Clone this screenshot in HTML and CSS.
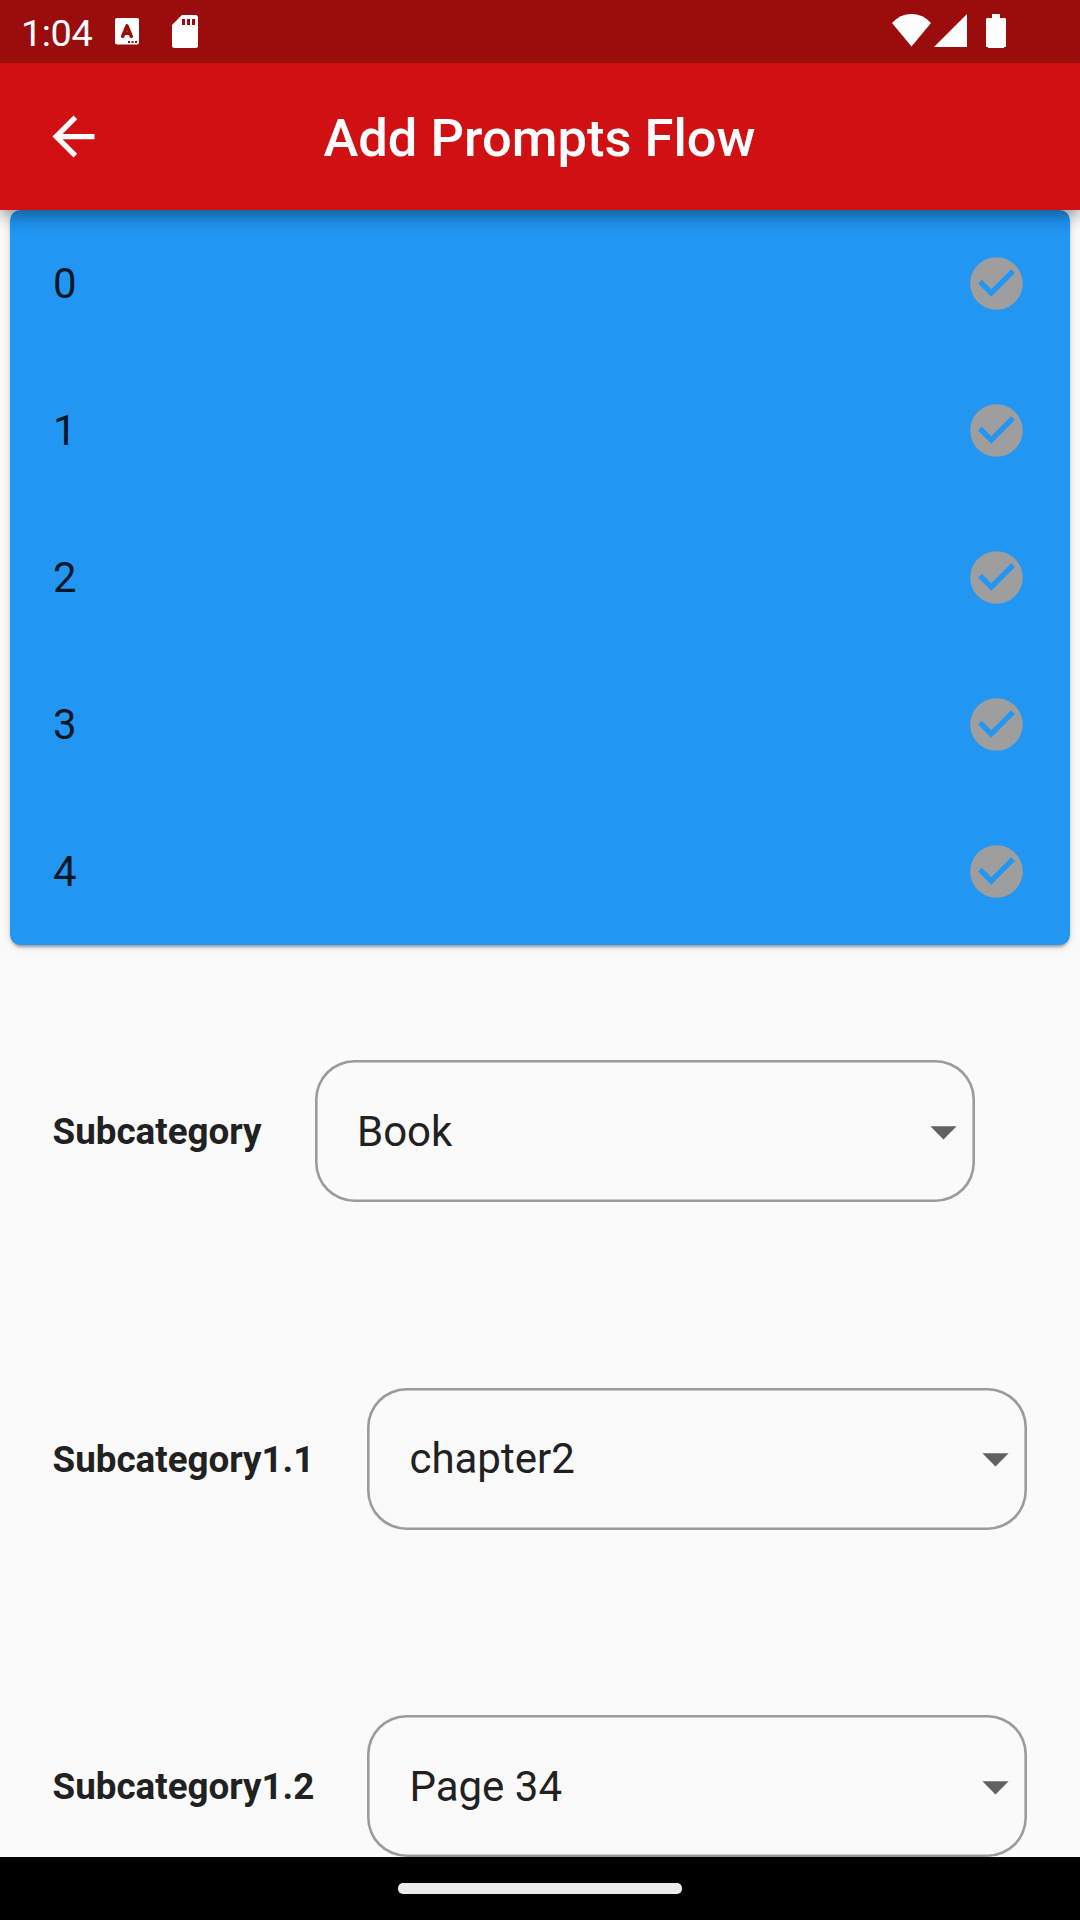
FILE: index.html
```html
<!DOCTYPE html>
<html lang="en">
<head>
<meta charset="utf-8">
<title>Add Prompts Flow</title>
<link rel="stylesheet" href="styles.css">
</head>
<body>
<svg class="defs" aria-hidden="true">
  <symbol id="check" viewBox="0 0 24 24"><path d="M12 2C6.48 2 2 6.48 2 12s4.480 10 10 10 10-4.480 10-10S17.520 2 12 2zm-2 15l-5-5 1.410-1.410L10 14.170l7.590-7.590L19 8l-9 9z"/></symbol>
  <symbol id="caret" viewBox="0 0 24 24"><path d="M7 10l5 5 5-5z"/></symbol>
</svg>
<div class="screen">
  <header class="top">
    <div class="status">
      <span class="clock">1:04</span>
      <svg class="keyboard" viewBox="0 0 24 27"><rect width="24" height="26.500" rx="2"/><path class="letter" d="M7.700 18.300L12 7.800L16.300 18.300M9 15.300H15"/><path class="dots" d="M13 23h2v2h-2zM16.500 23h2v2h-2zM20 23h2v2h-2z"/></svg>
      <svg class="sdcard" viewBox="0 0 26 33"><path d="M10 0H23.500Q26 0 26 2.500V30.500Q26 33 23.500 33H2.500Q0 33 0 30.500V10z"/><path class="dots" d="M10 4h3v6h-3zM15 4h3v6h-3zM20 4h3v6h-3z"/></svg>
      <span class="spacer"></span>
      <svg class="wifi" viewBox="0 0 39 33"><path d="M0 9Q8 0 19.500 0T39 9L19.500 32.500z"/></svg>
      <svg class="signal" viewBox="0 0 33 33"><path d="M33 0V33H0z"/></svg>
      <svg class="battery" viewBox="0 0 20 34"><path d="M6 0h8v4h5l1 1v28h-2v1H2v-1H0V5l1-1h5z"/></svg>
    </div>
    <div class="appbar">
      <svg class="back" viewBox="0 0 24 24"><path d="M20 11H7.830l5.590-5.590L12 4l-8 8 8 8 1.410-1.410L7.830 13H20v-2z"/></svg>
      <h1 class="title">Add Prompts Flow</h1>
    </div>
  </header>
  <main class="content">
    <ul class="card">
      <li class="tile"><span>0</span><svg class="icon check"><use href="#check"/></svg></li>
      <li class="tile"><span>1</span><svg class="icon check"><use href="#check"/></svg></li>
      <li class="tile"><span>2</span><svg class="icon check"><use href="#check"/></svg></li>
      <li class="tile"><span>3</span><svg class="icon check"><use href="#check"/></svg></li>
      <li class="tile"><span>4</span><svg class="icon check"><use href="#check"/></svg></li>
    </ul>
    <section class="fields">
      <div class="field"><span class="label label-main">Subcategory</span><div class="select"><span>Book</span><svg class="icon caret"><use href="#caret"/></svg></div></div>
      <div class="field"><span class="label">Subcategory1.1</span><div class="select"><span>chapter2</span><svg class="icon caret"><use href="#caret"/></svg></div></div>
      <div class="field"><span class="label">Subcategory1.2</span><div class="select"><span>Page 34</span><svg class="icon caret"><use href="#caret"/></svg></div></div>
    </section>
  </main>
  <footer class="nav"><div class="pill"></div></footer>
</div>
</body>
</html>
```

FILE: styles.css
```css
* { box-sizing: border-box; }
body { margin: 0; font-family: Roboto, sans-serif; color: #212121; background: #fafafa; }
svg { display: block; flex: none; }
.defs { display: none; }
.screen { width: 1080px; height: 1920px; display: flex; flex-direction: column; overflow: hidden; }

.top { position: relative; z-index: 1; flex: none; background: #d01012; color: #fff; fill: #fff;
  box-shadow: 0 5px 10px -2px rgba(0,0,0,.2), 0 10px 13px rgba(0,0,0,.14), 0 3px 26px rgba(0,0,0,.12); }
.status { height: 63px; display: flex; align-items: flex-start; padding: 14px 74px 0 21px; background: #9b0c0d; }
.clock { width: 94px; font-size: 37.800px; line-height: 38px; letter-spacing: -.4px; }
.keyboard { width: 24px; height: 27px; margin-top: 4px; }
.letter { fill: none; stroke: #9b0c0d; stroke-width: 3.500; stroke-linecap: round; stroke-linejoin: round; }
.dots { fill: #9b0c0d; }
.sdcard { width: 26px; height: 33px; margin: 1px 0 0 33px; }
.spacer { flex: 1; }
.wifi { width: 39px; height: 33px; }
.signal { width: 33px; height: 33px; margin: 0 19px 0 3px; }
.battery { width: 20px; height: 34px; }

.appbar { height: 147px; display: grid; grid-template-columns: 147px 1fr 148px; align-items: center; }
.back { width: 63px; height: 63px; margin-left: 42px; }
.title { margin: 0; padding-top: 2px; text-align: center; font-size: 52.500px; font-weight: 500; line-height: 62px; }

.content { flex: 1; min-height: 0; overflow: hidden; }
.card { list-style: none; margin: 0 10.400px; padding: 0; background: #2196f3; border-radius: 10.500px;
  box-shadow: 0 5px 3px -3px rgba(0,0,0,.2), 0 2px 3px rgba(0,0,0,.14), 0 2px 8px rgba(0,0,0,.12); }
.tile { height: 147px; padding: 0 42.100px 0 42.600px; display: flex; align-items: center; justify-content: space-between; font-size: 42px; color: rgba(0,0,0,.87); }
.icon { width: 63px; height: 63px; }
.check { fill: #9e9e9e; }
.caret { fill: #616161; }

.fields { padding: 115.400px 52.500px 0; display: flex; flex-direction: column; gap: 185.650px; }
.field { display: flex; align-items: center; }
.label { width: 314.900px; padding-top: 2px; font-size: 36.750px; font-weight: 700; line-height: 44px; white-space: nowrap; }
.label-main { width: 262.500px; }
.select { width: 660px; height: 141.750px; padding-left: 42px; display: flex; align-items: center; justify-content: space-between;
  border-radius: 39.400px; box-shadow: inset 0 0 0 2.600px #9b9b9b; font-size: 42px; }

.nav { flex: none; height: 63px; background: #000; display: flex; justify-content: center; padding-top: 26px; }
.pill { width: 284px; height: 11px; border-radius: 5px; background: #ebebeb; }
```
